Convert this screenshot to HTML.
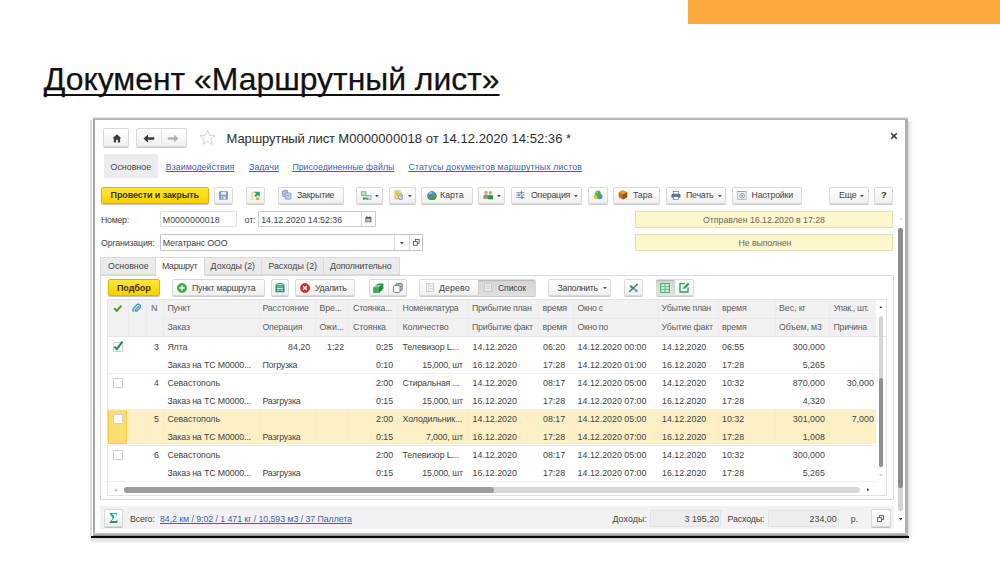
<!DOCTYPE html>
<html lang="ru">
<head>
<meta charset="utf-8">
<title>Документ «Маршрутный лист»</title>
<style>
html,body{margin:0;padding:0;}
body{width:1000px;height:563px;position:relative;overflow:hidden;background:#fff;font-family:"Liberation Sans",sans-serif;font-size:8.8px;color:#444;}
.a{position:absolute;white-space:nowrap;}
.orange{left:688px;top:0;width:312px;height:23.5px;background:#fea93f;}
h1{position:absolute;margin:0;left:43.7px;top:59px;font-size:31.9px;font-weight:normal;color:#111;line-height:40px;white-space:nowrap;text-decoration:underline;text-decoration-thickness:2.4px;text-underline-offset:3.7px;text-decoration-skip-ink:none;-webkit-text-stroke:0.25px #111;}
.btn{position:absolute;box-sizing:border-box;border:1px solid #d9d9d9;border-radius:2px;background:linear-gradient(#ffffff,#f0f0f0);box-shadow:0 1px 0.6px rgba(0,0,0,.2);}
.ybtn{position:absolute;box-sizing:border-box;border:1px solid #d9b800;border-radius:2px;background:linear-gradient(#ffe735,#f8d100);box-shadow:0 1px 1px rgba(0,0,0,.25);}
.b{font-weight:bold;color:#3a3510;}
.lnk{color:#3c62b4;text-decoration:underline;text-decoration-thickness:0.8px;text-underline-offset:1.3px;text-decoration-skip-ink:none;}
.hd{color:#606060;}
.st{color:#6c6856;}
</style>
</head>
<body>
<div class="a orange"></div>
<h1>Документ «Маршрутный лист»</h1>
<!-- window frame -->
<div class="a" style="left:91px;top:536px;width:818px;height:8px;background:linear-gradient(rgba(0,0,0,.22),rgba(0,0,0,0));"></div>
<div class="a" style="left:908px;top:121px;width:4.5px;height:416px;background:linear-gradient(90deg,rgba(0,0,0,.13),rgba(0,0,0,0));"></div>
<div class="a" style="left:93px;top:117.3px;width:814.9px;height:419px;background:#fff;"></div>
<div class="a" style="left:90.2px;top:119.5px;width:1.9px;height:416px;background:#dcdcdc;"></div>
<div class="a" style="left:93px;top:117.3px;width:814.9px;height:2.7px;background:linear-gradient(#f0f0f0,#c9c9c9 45%,#a3a3a3);"></div>
<div class="a" style="left:93px;top:118.6px;width:2.1px;height:417px;background:#a6a6a6;"></div>
<div class="a" style="left:905.2px;top:118.6px;width:2.7px;height:417px;background:#b0b0b0;"></div>
<div class="a" style="left:93px;top:533.4px;width:814.9px;height:2.6px;background:linear-gradient(#d2d2d2,#8a8a8a);"></div>
<div class="a" style="left:90.9px;top:535.8px;width:818.1px;height:2.5px;background:#0a0a0a;"></div>

<!-- title row -->
<div class="btn" style="left:103.2px;top:128.4px;width:25.8px;height:18.2px;"></div>
<svg class="a" style="left:111.5px;top:133.5px" width="9.90" height="9.00" viewBox="0 0 11 10"><path d="M5.5 0.3 L0.6 4.8 H2 V9.4 H4.5 V6.3 H6.5 V9.4 H9 V4.8 H10.4 Z" fill="#3a3a3a"/></svg>
<div class="btn" style="left:136.0px;top:128.4px;width:50.8px;height:18.2px;"></div>
<div class="a" style="left:161.2px;top:130.0px;width:0.9px;height:15.4px;background:#e6e6e6"></div>
<svg class="a" style="left:143.4px;top:133.6px" width="12.00" height="9.00" viewBox="0 0 12 9"><path d="M0.5 4.5 L5 0.6 V3.3 H11.2 V5.7 H5 V8.4 Z" fill="#3a3a3a"/></svg>
<svg class="a" style="left:167.2px;top:133.6px" width="12.00" height="9.00" viewBox="0 0 12 9"><path d="M11.5 4.5 L7 0.6 V3.3 H0.8 V5.7 H7 V8.4 Z" fill="#b4b4b4"/></svg>
<svg class="a" style="left:199.0px;top:129.0px" width="17.00" height="17.00" viewBox="0 0 17 17"><path d="M8.5 1.2 L10.6 6.2 L16 6.6 L11.9 10.1 L13.2 15.4 L8.5 12.5 L3.8 15.4 L5.1 10.1 L1 6.6 L6.4 6.2 Z" fill="#fff" stroke="#d2d2d2" stroke-width="1"/></svg>
<div class="a" style="left:226.6px;top:130.3px;font-size:13.04px;line-height:17px;color:#2e2e2e;"><span style="letter-spacing:-0.14px">Маршрутный лист </span><span style="letter-spacing:0.03px">М0000000018 от 14.12.2020 14:52:36 *</span></div>
<svg class="a" style="left:890.3px;top:131.9px" width="8.00" height="8.00" viewBox="0 0 8 8"><path d="M1.2 1.2 L6.8 6.8 M6.8 1.2 L1.2 6.8" stroke="#333" stroke-width="1.6" fill="none"/></svg>
<!-- nav row -->
<div class="a" style="left:103.5px;top:154.2px;width:54.5px;height:23.8px;background:#ececec;border-radius:2px;"></div>
<div class="a" style="top:160.6px;line-height:12px;font-size:8.8px;left:110.5px;letter-spacing:0.038px;">Основное</div>
<div class="a lnk" style="top:161.0px;line-height:12px;font-size:8.8px;left:165.8px;letter-spacing:0.032px;">Взаимодействия</div>
<div class="a lnk" style="top:161.0px;line-height:12px;font-size:8.8px;left:249.0px;letter-spacing:0.082px;">Задачи</div>
<div class="a lnk" style="top:161.0px;line-height:12px;font-size:8.8px;left:292.4px;letter-spacing:0.006px;">Присоединенные файлы</div>
<div class="a lnk" style="top:161.0px;line-height:12px;font-size:8.8px;left:408.4px;letter-spacing:0.139px;">Статусы документов маршрутных листов</div>
<!-- main toolbar -->
<div class="ybtn" style="left:100.8px;top:186.8px;width:107.8px;height:17.2px;"></div>
<div class="a b" style="top:189.3px;line-height:12px;font-size:9px;left:110.6px;letter-spacing:-0.105px;">Провести и закрыть</div>
<div class="btn" style="left:214.4px;top:186.8px;width:18.6px;height:17.2px;"></div>
<svg class="a" style="left:219.2px;top:191.0px" width="9.00" height="9.00" viewBox="0 0 10 10"><rect x="0.5" y="0.5" width="9" height="9" rx="1" fill="#7f9dc7" stroke="#6b8bb8" stroke-width="0.8"/><rect x="2.3" y="1" width="5.4" height="3.2" fill="#e6eef7"/><rect x="2.5" y="6" width="5" height="3.4" fill="#dfe7f0"/><rect x="3.4" y="6.6" width="1.4" height="2.2" fill="#6b8bb8"/></svg>
<div class="btn" style="left:245.6px;top:186.8px;width:19.0px;height:17.2px;"></div>
<svg class="a" style="left:250.6px;top:190.6px" width="9.90" height="9.90" viewBox="0 0 11 11"><path d="M1 1.5 H6.5 L9 4 V10.5 H1 Z" fill="#fbf3d0" stroke="#c9b98a" stroke-width="0.7"/><path d="M3.5 0.8 H9.8 V6.2 L7.6 4.6 L5.4 6.8 L3.6 5 L5.8 3 Z" fill="#25ad62"/><rect x="5.5" y="7.3" width="3.3" height="2.6" fill="#e2a13a"/></svg>
<div class="btn" style="left:277.6px;top:186.8px;width:66.0px;height:17.2px;"></div>
<svg class="a" style="left:281.9px;top:189.9px" width="9.90" height="9.90" viewBox="0 0 11 11"><rect x="0.6" y="0.6" width="5.6" height="6.6" rx="0.8" fill="#a9c0e2" stroke="#6f8fc4" stroke-width="0.8"/><rect x="3.6" y="3.2" width="6.4" height="7" rx="0.8" fill="#c6d6ee" stroke="#6f8fc4" stroke-width="0.8"/><path d="M5.2 6 H8.4 M5.2 8 H7.6" stroke="#7f95b2" stroke-width="0.8"/></svg>
<div class="a" style="top:189.3px;line-height:12px;font-size:8.8px;left:297.0px;letter-spacing:-0.228px;">Закрытие</div>
<div class="btn" style="left:356.0px;top:186.8px;width:27.0px;height:17.2px;"></div>
<svg class="a" style="left:361.1px;top:190.6px" width="10.80" height="9.90" viewBox="0 0 12 11"><rect x="0.5" y="0.8" width="5" height="4.2" fill="#bfe3b2" stroke="#58a65a" stroke-width="0.7"/><path d="M2.2 6.2 L5.2 8.6 L2.2 10.6 Z" fill="#3aa046"/><rect x="5.6" y="4.8" width="5.6" height="4.6" fill="#cfe0f2" stroke="#6f93bd" stroke-width="0.7"/><path d="M4 8.4 H8" stroke="#3aa046" stroke-width="1.2"/></svg>
<svg class="a" style="left:375.4px;top:194.7px" width="3.80" height="2.40" viewBox="0 0 3.8 2.4"><path d="M0 0 H3.8 L1.9 2.4 Z" fill="#555"/></svg>
<div class="btn" style="left:389.0px;top:186.8px;width:26.6px;height:17.2px;"></div>
<svg class="a" style="left:393.6px;top:190.4px" width="9.90" height="9.90" viewBox="0 0 11 11"><path d="M1 0.8 H6 L8 2.8 V10 H1 Z" fill="#f7d978" stroke="#d1a93a" stroke-width="0.7"/><path d="M2.4 3.6 H6.4 M2.4 5.4 H5" stroke="#c79b2a" stroke-width="0.8"/><circle cx="7.6" cy="7.8" r="2.6" fill="#e9f0fa" stroke="#4f78b3" stroke-width="0.9"/><path d="M7.6 6.4 V7.9 H8.8" stroke="#4f78b3" stroke-width="0.7" fill="none"/></svg>
<svg class="a" style="left:408.1px;top:194.7px" width="3.80" height="2.40" viewBox="0 0 3.8 2.4"><path d="M0 0 H3.8 L1.9 2.4 Z" fill="#555"/></svg>
<div class="btn" style="left:421.0px;top:186.8px;width:52.0px;height:17.2px;"></div>
<svg class="a" style="left:427.1px;top:190.6px" width="9.90" height="9.90" viewBox="0 0 11 11"><circle cx="5.5" cy="5.5" r="5" fill="#4d8fd0" stroke="#6f7f86" stroke-width="0.8"/><path d="M1 7 Q3.2 3.4 5.2 6 Q7 3.8 10 7.4 A5 5 0 0 1 1 7 Z" fill="#3fa14a"/><path d="M2.4 3 Q4 1.4 6 2.2" stroke="#d8ecff" stroke-width="1" fill="none"/></svg>
<div class="a" style="top:189.3px;line-height:12px;font-size:8.8px;left:440.0px;letter-spacing:0.012px;">Карта</div>
<div class="btn" style="left:478.4px;top:186.8px;width:26.6px;height:17.2px;"></div>
<svg class="a" style="left:482.9px;top:190.4px" width="10.80" height="9.90" viewBox="0 0 12 11"><circle cx="3.4" cy="2.6" r="1.9" fill="#d8a46a"/><path d="M0.4 9.8 V6.6 Q0.4 4.8 3.4 4.8 Q6 4.8 6.2 6.6 V9.8 Z" fill="#8a8f96"/><circle cx="8.2" cy="3" r="1.9" fill="#d8a46a"/><path d="M5.4 10.4 V7 Q5.6 5.2 8.2 5.2 Q11 5.2 11.2 7 V10.4 Z" fill="#2f9a4a"/><path d="M7.2 8.6 L8.4 10.6 L9.6 8.6 Z" fill="#1f7f3a"/></svg>
<svg class="a" style="left:497.1px;top:194.7px" width="3.80" height="2.40" viewBox="0 0 3.8 2.4"><path d="M0 0 H3.8 L1.9 2.4 Z" fill="#555"/></svg>
<div class="btn" style="left:511.0px;top:186.8px;width:71.4px;height:17.2px;"></div>
<svg class="a" style="left:516.3px;top:191.2px" width="8.80" height="8.00" viewBox="0 0 11 10"><path d="M0.4 2 H10.6 M0.4 5 H10.6 M0.4 8 H10.6" stroke="#5f86b8" stroke-width="1"/><path d="M6.8 0.4 V3.6 M3.6 3.4 V6.6 M7.4 6.4 V9.6" stroke="#3f6ea8" stroke-width="1.4"/></svg>
<div class="a" style="top:189.3px;line-height:12px;font-size:8.8px;left:531.0px;letter-spacing:-0.240px;">Операция</div>
<svg class="a" style="left:574.1px;top:194.7px" width="3.80" height="2.40" viewBox="0 0 3.8 2.4"><path d="M0 0 H3.8 L1.9 2.4 Z" fill="#555"/></svg>
<div class="btn" style="left:588.0px;top:186.8px;width:19.6px;height:17.2px;"></div>
<svg class="a" style="left:593.0px;top:190.4px" width="9.90" height="9.90" viewBox="0 0 11 11"><circle cx="3.4" cy="7.2" r="3" fill="#f2c62e"/><circle cx="7.6" cy="7.2" r="3" fill="#3f93da"/><circle cx="5.5" cy="3.6" r="3" fill="#49b04e"/><circle cx="4.6" cy="2.6" r="0.9" fill="#bfe9bf"/></svg>
<div class="btn" style="left:613.0px;top:186.8px;width:47.4px;height:17.2px;"></div>
<svg class="a" style="left:618.3px;top:190.4px" width="9.90" height="9.90" viewBox="0 0 11 11"><path d="M5.5 0.4 L10.2 2.6 V8.2 L5.5 10.6 L0.8 8.2 V2.6 Z" fill="#c0701c"/><path d="M5.5 0.4 L10.2 2.6 L5.5 5 L0.8 2.6 Z" fill="#e59a3c"/><path d="M5.5 5 V10.6 L10.2 8.2 V2.6 Z" fill="#9a5512"/></svg>
<div class="a" style="top:189.3px;line-height:12px;font-size:8.8px;left:633.0px;letter-spacing:-0.12px;">Тара</div>
<div class="btn" style="left:666.0px;top:186.8px;width:60.4px;height:17.2px;"></div>
<svg class="a" style="left:670.8px;top:190.7px" width="9.90" height="9.00" viewBox="0 0 11 10"><rect x="2.6" y="0.5" width="5.8" height="3" fill="#f4f7fb" stroke="#55698a" stroke-width="0.7"/><rect x="0.5" y="3.2" width="10" height="4.4" rx="1" fill="#54709c"/><rect x="2.6" y="6" width="5.8" height="3.5" fill="#fff" stroke="#55698a" stroke-width="0.7"/></svg>
<div class="a" style="top:189.3px;line-height:12px;font-size:8.8px;left:686.0px;letter-spacing:-0.223px;">Печать</div>
<svg class="a" style="left:718.1px;top:194.7px" width="3.80" height="2.40" viewBox="0 0 3.8 2.4"><path d="M0 0 H3.8 L1.9 2.4 Z" fill="#555"/></svg>
<div class="btn" style="left:732.0px;top:186.8px;width:69.6px;height:17.2px;"></div>
<svg class="a" style="left:737.1px;top:190.4px" width="9.90" height="9.90" viewBox="0 0 11 11"><rect x="0.6" y="1.6" width="9.6" height="8.8" fill="#eef1f5" stroke="#9aa7b8" stroke-width="0.7"/><path d="M0.6 1.6 H10.2" stroke="#7f8ea3" stroke-width="1.2" stroke-dasharray="1.2 0.8"/><circle cx="5.8" cy="6.4" r="2.6" fill="none" stroke="#8796ab" stroke-width="1"/><circle cx="5.8" cy="6.4" r="1" fill="#8796ab"/></svg>
<div class="a" style="top:189.3px;line-height:12px;font-size:8.8px;left:751.6px;letter-spacing:-0.205px;">Настройки</div>
<div class="btn" style="left:829.4px;top:186.8px;width:39.4px;height:17.2px;"></div>
<div class="a" style="top:189.3px;line-height:12px;font-size:8.8px;left:839.0px;letter-spacing:-0.12px;">Еще</div>
<svg class="a" style="left:860.1px;top:194.7px" width="3.80" height="2.40" viewBox="0 0 3.8 2.4"><path d="M0 0 H3.8 L1.9 2.4 Z" fill="#555"/></svg>
<div class="btn" style="left:873.8px;top:186.8px;width:19.4px;height:17.2px;"></div>
<div class="a b" style="top:189.3px;line-height:12px;font-size:9.5px;left:881.0px;">?</div>
<!-- header fields -->
<div class="a" style="top:213.6px;line-height:12px;font-size:8.8px;left:101.0px;letter-spacing:-0.278px;">Номер:</div>
<div class="a" style="left:160.0px;top:211.0px;width:77.4px;height:16.4px;box-sizing:border-box;border:1px solid #e0e0e0;background:#fff;border-radius:1px;"></div>
<div class="a" style="top:213.6px;line-height:12px;font-size:8.8px;left:162.8px;letter-spacing:0.051px;">М0000000018</div>
<div class="a" style="top:213.6px;line-height:12px;font-size:8.8px;left:244.6px;letter-spacing:-0.12px;">от:</div>
<div class="a" style="left:258.0px;top:211.0px;width:117.6px;height:16.4px;box-sizing:border-box;border:1px solid #c9c9c9;background:#fff;border-radius:1px;"></div>
<div class="a" style="left:361.4px;top:212.0px;width:1.0px;height:14.4px;background:#dcdcdc;"></div>
<div class="a" style="top:213.6px;line-height:12px;font-size:8.85px;left:261.2px;letter-spacing:-0.008px;">14.12.2020 14:52:36</div>
<svg class="a" style="left:365.2px;top:215.8px" width="6.80" height="6.80" viewBox="0 0 8 8"><rect x="0.5" y="1.2" width="7" height="6.3" rx="0.8" fill="#555"/><rect x="1.6" y="3.2" width="4.8" height="3.2" fill="#fff"/><path d="M2.2 0.2 V2 M5.8 0.2 V2" stroke="#555" stroke-width="1"/><path d="M1.6 4.8 H6.4 M3.2 3.2 V6.4 M4.8 3.2 V6.4" stroke="#777" stroke-width="0.5"/></svg>
<div class="a" style="left:635.0px;top:211.0px;width:258.2px;height:16.6px;box-sizing:border-box;border:1px solid #e6deb0;background:#fdf7ce;"></div>
<div class="a st" style="top:213.6px;line-height:12px;font-size:8.8px;left:703.0px;letter-spacing:-0.030px;">Отправлен 16.12.2020 в 17:28</div>
<div class="a" style="top:236.6px;line-height:12px;font-size:8.8px;left:101.0px;letter-spacing:-0.167px;">Организация:</div>
<div class="a" style="left:160.0px;top:234.0px;width:263.0px;height:16.6px;box-sizing:border-box;border:1px solid #c4c4c4;background:#fff;border-radius:1px;"></div>
<div class="a" style="left:394.4px;top:235.0px;width:1.0px;height:14.6px;background:#dcdcdc;"></div>
<div class="a" style="left:408.8px;top:235.0px;width:1.0px;height:14.6px;background:#dcdcdc;"></div>
<div class="a" style="top:236.6px;line-height:12px;font-size:8.8px;left:162.8px;letter-spacing:-0.102px;">Мегатранс ООО</div>
<svg class="a" style="left:399.9px;top:241.7px" width="3.80" height="2.40" viewBox="0 0 3.8 2.4"><path d="M0 0 H3.8 L1.9 2.4 Z" fill="#444"/></svg>
<svg class="a" style="left:412.9px;top:239.1px" width="6.80" height="6.80" viewBox="0 0 8 8"><rect x="2.8" y="0.6" width="4.4" height="4.4" fill="#fff" stroke="#555" stroke-width="1"/><rect x="0.6" y="3" width="4.4" height="4.4" fill="#fff" stroke="#555" stroke-width="1"/></svg>
<div class="a" style="left:635.0px;top:233.8px;width:258.2px;height:16.8px;box-sizing:border-box;border:1px solid #e6deb0;background:#fdf7ce;"></div>
<div class="a st" style="top:236.6px;line-height:12px;font-size:8.8px;left:738.6px;letter-spacing:-0.12px;">Не выполнен</div>
<!-- tabs -->
<div class="a" style="left:100.2px;top:274.5px;width:793.4px;height:225.1px;box-sizing:border-box;border:1px solid #dadada;background:#fff;"></div>
<div class="a" style="left:100.2px;top:256.6px;width:55.4px;height:18.6px;box-sizing:border-box;border:1px solid #dadada;background:#ebebeb;"></div>
<div class="a" style="top:260.1px;line-height:12px;font-size:8.8px;left:108.0px;letter-spacing:0.038px;">Основное</div>
<div class="a" style="left:154.6px;top:256.6px;width:50.4px;height:19.4px;box-sizing:border-box;border:1px solid #dadada;border-bottom:none;background:#fff;"></div>
<div class="a" style="top:260.1px;line-height:12px;font-size:8.8px;left:162.0px;letter-spacing:-0.323px;">Маршрут</div>
<div class="a" style="left:204.0px;top:256.6px;width:58.4px;height:18.6px;box-sizing:border-box;border:1px solid #dadada;background:#ebebeb;"></div>
<div class="a" style="top:260.1px;line-height:12px;font-size:8.8px;left:210.6px;letter-spacing:-0.011px;">Доходы (2)</div>
<div class="a" style="left:261.4px;top:256.6px;width:62.6px;height:18.6px;box-sizing:border-box;border:1px solid #dadada;background:#ebebeb;"></div>
<div class="a" style="top:260.1px;line-height:12px;font-size:8.8px;left:268.4px;letter-spacing:0.007px;">Расходы (2)</div>
<div class="a" style="left:323.0px;top:256.6px;width:77.0px;height:18.6px;box-sizing:border-box;border:1px solid #dadada;background:#ebebeb;"></div>
<div class="a" style="top:260.1px;line-height:12px;font-size:8.8px;left:330.0px;letter-spacing:-0.138px;">Дополнительно</div>
<!-- inner toolbar -->
<div class="ybtn" style="left:107.6px;top:279.0px;width:52.4px;height:17.4px;"></div>
<div class="a b" style="top:281.6px;line-height:12px;font-size:9px;left:117.0px;letter-spacing:-0.095px;">Подбор</div>
<div class="btn" style="left:172.0px;top:279.0px;width:92.6px;height:17.4px;"></div>
<svg class="a" style="left:177.2px;top:282.8px" width="10.00" height="10.00" viewBox="0 0 10 10"><circle cx="5" cy="5" r="4.6" fill="#3fae49" stroke="#2b8f39" stroke-width="0.6"/><path d="M5 2.4 V7.6 M2.4 5 H7.6" stroke="#fff" stroke-width="1.5"/></svg>
<div class="a" style="top:281.6px;line-height:12px;font-size:8.8px;left:192.0px;letter-spacing:-0.260px;">Пункт маршрута</div>
<div class="btn" style="left:270.6px;top:279.0px;width:18.8px;height:17.4px;"></div>
<svg class="a" style="left:274.8px;top:282.3px" width="10.00" height="10.60" viewBox="0 0 10 10.6"><path d="M0.5 2.4 Q5 -1 9.5 2.4 V10.2 H0.5 Z" fill="#2f9a5a"/><path d="M1.4 2.8 Q5 0.6 8.6 2.8 V3.6 H1.4 Z" fill="#9fd8b0"/><rect x="2" y="4" width="6" height="4.6" fill="#5aa0dc"/><rect x="2" y="6.2" width="6" height="0.9" fill="#dfefff"/><rect x="2.6" y="8" width="1.2" height="1.2" fill="#f5e37a"/><rect x="6.2" y="8" width="1.2" height="1.2" fill="#f5e37a"/></svg>
<div class="btn" style="left:295.0px;top:279.0px;width:60.0px;height:17.4px;"></div>
<svg class="a" style="left:300.0px;top:282.8px" width="10.00" height="10.00" viewBox="0 0 10 10"><circle cx="5" cy="5" r="4.6" fill="#d9302c" stroke="#b01f1f" stroke-width="0.6"/><path d="M3.2 3.2 L6.8 6.8 M6.8 3.2 L3.2 6.8" stroke="#fff" stroke-width="1.4"/></svg>
<div class="a" style="top:281.6px;line-height:12px;font-size:8.8px;left:315.0px;letter-spacing:-0.307px;">Удалить</div>
<div class="btn" style="left:368.6px;top:279.0px;width:38.0px;height:17.4px;"></div>
<div class="a" style="left:387.8px;top:280.0px;width:1.0px;height:15.4px;background:#dedede;"></div>
<svg class="a" style="left:372.8px;top:282.6px" width="11.00" height="10.00" viewBox="0 0 11 10"><path d="M3 2 L6 0.6 L10.4 0.6 L10.4 5.4 L8 8 H3 Z" fill="#2f9a4a"/><path d="M0.6 4.4 H6.4 V9.6 H0.6 Z" fill="#3fae55" stroke="#1f7f3a" stroke-width="0.6"/><path d="M0.6 4.4 L3 2 H8.6 L6.4 4.4 Z" fill="#7fd08f"/><path d="M6.4 4.4 L8.6 2 V7.2 L6.4 9.6 Z" fill="#1f7f3a"/></svg>
<svg class="a" style="left:392.8px;top:282.6px" width="10.00" height="10.00" viewBox="0 0 10 10"><rect x="2.8" y="0.6" width="6.4" height="6.8" rx="0.8" fill="#b3bccb" stroke="#6a7488" stroke-width="0.9"/><rect x="0.6" y="2.6" width="6.4" height="6.8" rx="0.8" fill="#fff" stroke="#6a7488" stroke-width="0.9"/></svg>
<div class="btn" style="left:419.2px;top:279.0px;width:116.6px;height:17.4px;"></div>
<div class="a" style="left:478.4px;top:279.5px;width:57.1px;height:16.4px;background:linear-gradient(#d5d5d5,#e0e0e0);border-radius:0 2px 2px 0;box-shadow:inset 0 1px 1px rgba(0,0,0,.15);"></div>
<div class="a" style="left:478.0px;top:280.0px;width:1.0px;height:15.4px;background:#cfcfcf;"></div>
<svg class="a" style="left:426.0px;top:283.0px" width="8.00" height="9.00" viewBox="0 0 8 9"><rect x="0.5" y="0.5" width="7" height="8" fill="#f3f3f3" stroke="#c9c9c9" stroke-width="0.8"/><path d="M2.6 0.5 V8.5 M2.6 3 H7.5 M2.6 5.8 H7.5" stroke="#cfcfcf" stroke-width="0.7"/></svg>
<div class="a" style="top:281.6px;line-height:12px;font-size:8.8px;left:439.0px;letter-spacing:0.089px;">Дерево</div>
<svg class="a" style="left:484.0px;top:283.0px" width="8.00" height="9.00" viewBox="0 0 8 9"><rect x="0.5" y="0.5" width="7" height="8" fill="#ececec" stroke="#c2c2c2" stroke-width="0.8"/><path d="M2 3 H6 M2 5.2 H6" stroke="#c2c2c2" stroke-width="0.7"/></svg>
<div class="a" style="top:281.6px;line-height:12px;font-size:8.8px;left:498.0px;letter-spacing:-0.233px;">Список</div>
<div class="btn" style="left:548.4px;top:279.0px;width:62.2px;height:17.4px;"></div>
<div class="a" style="top:281.6px;line-height:12px;font-size:8.8px;left:557.6px;letter-spacing:-0.328px;">Заполнить</div>
<svg class="a" style="left:603.1px;top:286.9px" width="3.80" height="2.40" viewBox="0 0 3.8 2.4"><path d="M0 0 H3.8 L1.9 2.4 Z" fill="#555"/></svg>
<div class="btn" style="left:623.6px;top:279.0px;width:19.4px;height:17.4px;"></div>
<svg class="a" style="left:628.0px;top:282.6px" width="11.00" height="10.00" viewBox="0 0 11 10"><path d="M1 9 L9.6 1.2" stroke="#2f9a4a" stroke-width="1.6"/><path d="M2.2 2.6 L4.6 5" stroke="#2f9a4a" stroke-width="2"/><path d="M6.6 6.2 L9.4 8.8" stroke="#5aa0e0" stroke-width="2.2"/><circle cx="5.4" cy="5.2" r="1.2" fill="#2b7f8a"/></svg>
<div class="btn" style="left:655.6px;top:279.0px;width:38.0px;height:17.4px;"></div>
<div class="a" style="left:656.1px;top:279.5px;width:18.3px;height:16.4px;background:linear-gradient(#d6d6d6,#e2e2e2);border-radius:2px 0 0 2px;box-shadow:inset 0 1px 1px rgba(0,0,0,.15);"></div>
<div class="a" style="left:674.2px;top:280.0px;width:1.0px;height:15.4px;background:#cfcfcf;"></div>
<svg class="a" style="left:660.0px;top:282.6px" width="10.00" height="10.00" viewBox="0 0 10 10"><rect x="0.6" y="0.6" width="8.8" height="8.8" fill="#d3efd9" stroke="#49a86a" stroke-width="1"/><path d="M0.6 3.6 H9.4 M0.6 6.4 H9.4 M5 0.6 V9.4" stroke="#5ab47a" stroke-width="0.9"/></svg>
<svg class="a" style="left:679.0px;top:282.4px" width="11.00" height="11.00" viewBox="0 0 11 11"><path d="M6 1.6 H1 V10 H9 V5.6" fill="#eefaf1" stroke="#2f9a5a" stroke-width="1.3"/><path d="M4 7.2 L5 4.6 L9 0.8 L10.4 2.2 L6.6 6.2 Z" fill="#2f9a5a"/></svg>
<!-- table -->
<div class="a" style="left:107.4px;top:299.2px;width:779.6px;height:196.4px;box-sizing:border-box;border:1px solid #e3e3e3;background:#fff;"></div>
<div class="a" style="left:107.9px;top:299.7px;width:768.1px;height:36.9px;background:#f1f1f1;"></div>
<div class="a" style="left:107.9px;top:336.3px;width:778.6px;height:0.8px;background:#e3e3e3;"></div>
<div class="a" style="left:107.9px;top:409.4px;width:768.6px;height:35.0px;background:#fdf0c6;"></div>
<div class="a" style="left:107.9px;top:409.4px;width:18.9px;height:35.0px;box-sizing:border-box;background:#fbdd72;border:1px solid #f4cc45;"></div>
<div class="a" style="left:107.9px;top:372.6px;width:768.6px;height:0.8px;background:#f0f0f0;"></div>
<div class="a" style="left:107.9px;top:408.8px;width:768.6px;height:0.8px;background:#f0f0f0;"></div>
<div class="a" style="left:107.9px;top:444.6px;width:768.6px;height:0.8px;background:#f0f0f0;"></div>
<div class="a" style="left:107.9px;top:481.2px;width:768.6px;height:0.8px;background:#f0f0f0;"></div>
<div class="a" style="left:127.6px;top:299.7px;width:0.9px;height:36.7px;background:#ebebeb;"></div>
<div class="a" style="left:146.0px;top:299.7px;width:0.9px;height:36.7px;background:#ebebeb;"></div>
<div class="a" style="left:162.6px;top:299.7px;width:0.9px;height:36.7px;background:#ebebeb;"></div>
<div class="a" style="left:258.6px;top:299.7px;width:0.9px;height:36.7px;background:#ebebeb;"></div>
<div class="a" style="left:314.6px;top:299.7px;width:0.9px;height:36.7px;background:#ebebeb;"></div>
<div class="a" style="left:348.0px;top:299.7px;width:0.9px;height:36.7px;background:#ebebeb;"></div>
<div class="a" style="left:397.4px;top:299.7px;width:0.9px;height:36.7px;background:#ebebeb;"></div>
<div class="a" style="left:468.0px;top:299.7px;width:0.9px;height:36.7px;background:#ebebeb;"></div>
<div class="a" style="left:538.0px;top:299.7px;width:0.9px;height:36.7px;background:#ebebeb;"></div>
<div class="a" style="left:573.0px;top:299.7px;width:0.9px;height:36.7px;background:#ebebeb;"></div>
<div class="a" style="left:658.0px;top:299.7px;width:0.9px;height:36.7px;background:#ebebeb;"></div>
<div class="a" style="left:717.6px;top:299.7px;width:0.9px;height:36.7px;background:#ebebeb;"></div>
<div class="a" style="left:774.5px;top:299.7px;width:0.9px;height:36.7px;background:#ebebeb;"></div>
<div class="a" style="left:829.3px;top:299.7px;width:0.9px;height:36.7px;background:#ebebeb;"></div>
<div class="a" style="left:258.6px;top:318.0px;width:0.9px;height:0.0px;"></div>
<div class="a" style="left:314.6px;top:318.0px;width:0.9px;height:0.0px;"></div>
<div class="a" style="left:348.0px;top:318.0px;width:0.9px;height:0.0px;"></div>
<div class="a" style="left:397.4px;top:318.0px;width:0.9px;height:0.0px;"></div>
<div class="a" style="left:468.0px;top:318.0px;width:0.9px;height:0.0px;"></div>
<div class="a" style="left:538.0px;top:318.0px;width:0.9px;height:0.0px;"></div>
<div class="a" style="left:573.0px;top:318.0px;width:0.9px;height:0.0px;"></div>
<div class="a" style="left:658.0px;top:318.0px;width:0.9px;height:0.0px;"></div>
<div class="a" style="left:717.6px;top:318.0px;width:0.9px;height:0.0px;"></div>
<div class="a" style="left:774.5px;top:318.0px;width:0.9px;height:0.0px;"></div>
<div class="a" style="left:829.3px;top:318.0px;width:0.9px;height:0.0px;"></div>
<div class="a" style="left:162.6px;top:317.8px;width:713.4px;height:0.8px;background:#eaeaea;"></div>
<div class="a" style="left:127.6px;top:409.4px;width:0.9px;height:35.0px;background:#fbedc1;"></div>
<div class="a" style="left:146.0px;top:409.4px;width:0.9px;height:35.0px;background:#fbedc1;"></div>
<div class="a" style="left:162.6px;top:409.4px;width:0.9px;height:35.0px;background:#fbedc1;"></div>
<div class="a" style="left:258.6px;top:409.4px;width:0.9px;height:35.0px;background:#fbedc1;"></div>
<div class="a" style="left:314.6px;top:409.4px;width:0.9px;height:35.0px;background:#fbedc1;"></div>
<div class="a" style="left:348.0px;top:409.4px;width:0.9px;height:35.0px;background:#fbedc1;"></div>
<div class="a" style="left:397.4px;top:409.4px;width:0.9px;height:35.0px;background:#fbedc1;"></div>
<div class="a" style="left:468.0px;top:409.4px;width:0.9px;height:35.0px;background:#fbedc1;"></div>
<div class="a" style="left:538.0px;top:409.4px;width:0.9px;height:35.0px;background:#fbedc1;"></div>
<div class="a" style="left:573.0px;top:409.4px;width:0.9px;height:35.0px;background:#fbedc1;"></div>
<div class="a" style="left:658.0px;top:409.4px;width:0.9px;height:35.0px;background:#fbedc1;"></div>
<div class="a" style="left:717.6px;top:409.4px;width:0.9px;height:35.0px;background:#fbedc1;"></div>
<div class="a" style="left:774.5px;top:409.4px;width:0.9px;height:35.0px;background:#fbedc1;"></div>
<div class="a" style="left:829.3px;top:409.4px;width:0.9px;height:35.0px;background:#fbedc1;"></div>
<svg class="a" style="left:112.5px;top:304.0px" width="9.50" height="8.55" viewBox="0 0 10 9"><path d="M1.2 4.6 L3.9 7.2 L8.8 1.8" stroke="#4d9e2e" stroke-width="2.2" fill="none"/></svg>
<svg class="a" style="left:132.4px;top:303.0px" width="9.00" height="10.00" viewBox="0 0 9 10"><path d="M6.8 3.2 L3.6 6.4 Q2.8 7.4 3.8 8 Q4.6 8.4 5.4 7.6 L8 4.8 Q9 3 7.6 1.8 Q6 0.6 4.6 2 L1.6 5.2 Q0.2 7 1.6 8.6" stroke="#4a9bd4" stroke-width="1.5" fill="none"/></svg>
<div class="a hd" style="top:302.2px;line-height:12px;font-size:8.85px;left:151.0px;">N</div>
<div class="a hd" style="top:302.2px;line-height:12px;font-size:8.8px;left:167.4px;letter-spacing:-0.12px;">Пункт</div>
<div class="a hd" style="top:321.4px;line-height:12px;font-size:8.8px;left:167.4px;letter-spacing:-0.12px;">Заказ</div>
<div class="a hd" style="top:302.2px;line-height:12px;font-size:8.8px;left:262.4px;letter-spacing:-0.117px;">Расстояние</div>
<div class="a hd" style="top:321.4px;line-height:12px;font-size:8.8px;left:262.4px;letter-spacing:-0.133px;">Операция</div>
<div class="a hd" style="top:302.2px;line-height:12px;font-size:8.8px;left:319.4px;letter-spacing:-0.073px;">Вре...</div>
<div class="a hd" style="top:321.4px;line-height:12px;font-size:8.8px;left:319.4px;letter-spacing:-0.12px;">Ожи...</div>
<div class="a hd" style="top:302.2px;line-height:12px;font-size:8.8px;left:353.0px;letter-spacing:-0.219px;">Стоянка...</div>
<div class="a hd" style="top:321.4px;line-height:12px;font-size:8.8px;left:353.0px;letter-spacing:-0.12px;">Стоянка</div>
<div class="a hd" style="top:302.2px;line-height:12px;font-size:8.8px;left:402.6px;letter-spacing:-0.265px;">Номенклатура</div>
<div class="a hd" style="top:321.4px;line-height:12px;font-size:8.8px;left:402.6px;letter-spacing:-0.12px;">Количество</div>
<div class="a hd" style="top:302.2px;line-height:12px;font-size:8.8px;left:472.0px;letter-spacing:-0.306px;">Прибытие план</div>
<div class="a hd" style="top:321.4px;line-height:12px;font-size:8.8px;left:472.0px;letter-spacing:-0.231px;">Прибытие факт</div>
<div class="a hd" style="top:302.2px;line-height:12px;font-size:8.8px;left:542.4px;letter-spacing:-0.151px;">время</div>
<div class="a hd" style="top:321.4px;line-height:12px;font-size:8.8px;left:542.4px;letter-spacing:-0.151px;">время</div>
<div class="a hd" style="top:302.2px;line-height:12px;font-size:8.8px;left:577.6px;letter-spacing:-0.345px;">Окно с</div>
<div class="a hd" style="top:321.4px;line-height:12px;font-size:8.8px;left:577.6px;letter-spacing:-0.330px;">Окно по</div>
<div class="a hd" style="top:302.2px;line-height:12px;font-size:8.8px;left:661.6px;letter-spacing:-0.313px;">Убытие план</div>
<div class="a hd" style="top:321.4px;line-height:12px;font-size:8.8px;left:661.6px;letter-spacing:-0.167px;">Убытие факт</div>
<div class="a hd" style="top:302.2px;line-height:12px;font-size:8.8px;left:722.0px;letter-spacing:-0.151px;">время</div>
<div class="a hd" style="top:321.4px;line-height:12px;font-size:8.8px;left:722.0px;letter-spacing:-0.151px;">время</div>
<div class="a hd" style="top:302.2px;line-height:12px;font-size:8.8px;left:779.0px;letter-spacing:-0.063px;">Вес, кг</div>
<div class="a hd" style="top:321.4px;line-height:12px;font-size:8.8px;left:779.0px;letter-spacing:-0.125px;">Объем, м3</div>
<div class="a hd" style="top:302.2px;line-height:12px;font-size:8.8px;left:833.5px;letter-spacing:-0.357px;">Упак., шт.</div>
<div class="a hd" style="top:321.4px;line-height:12px;font-size:8.8px;left:833.5px;letter-spacing:-0.291px;">Причина</div>
<div class="a" style="left:113.2px;top:341.7px;width:9.8px;height:10.7px;box-sizing:border-box;border:1px solid #cfcfcf;background:#fff;border-radius:1px;"></div>
<svg class="a" style="left:113.4px;top:339.9px" width="11.00" height="11.00" viewBox="0 0 11 11"><path d="M1.2 6.6 L3.8 9.2 L9.4 1.6" stroke="#1c8f52" stroke-width="2" fill="none"/></svg>
<div class="a" style="top:340.5px;line-height:12px;font-size:8.85px;right:841.2px;">3</div>
<div class="a" style="top:340.5px;line-height:12px;font-size:8.8px;left:167.4px;letter-spacing:-0.12px;">Ялта</div>
<div class="a" style="top:340.5px;line-height:12px;font-size:8.85px;right:689.8px;">84,20</div>
<div class="a" style="top:340.5px;line-height:12px;font-size:8.85px;right:655.8px;">1:22</div>
<div class="a" style="top:340.5px;line-height:12px;font-size:8.85px;right:606.8px;">0:25</div>
<div class="a" style="top:340.5px;line-height:12px;font-size:8.8px;left:402.6px;letter-spacing:-0.110px;">Телевизор L...</div>
<div class="a" style="top:340.5px;line-height:12px;font-size:8.85px;left:472.6px;">14.12.2020</div>
<div class="a" style="top:340.5px;line-height:12px;font-size:8.85px;left:543.0px;">06:20</div>
<div class="a" style="top:340.5px;line-height:12px;font-size:8.85px;left:577.6px;">14.12.2020 00:00</div>
<div class="a" style="top:340.5px;line-height:12px;font-size:8.85px;left:662.0px;">14.12.2020</div>
<div class="a" style="top:340.5px;line-height:12px;font-size:8.85px;left:722.0px;">06:55</div>
<div class="a" style="top:340.5px;line-height:12px;font-size:8.85px;right:175.2px;">300,000</div>
<div class="a" style="top:358.5px;line-height:12px;font-size:8.8px;left:167.4px;letter-spacing:-0.129px;">Заказ на ТС М0000...</div>
<div class="a" style="top:358.5px;line-height:12px;font-size:8.8px;left:262.4px;letter-spacing:-0.212px;">Погрузка</div>
<div class="a" style="top:358.5px;line-height:12px;font-size:8.85px;right:606.8px;">0:10</div>
<div class="a" style="top:358.5px;line-height:12px;font-size:8.8px;right:537.2px;letter-spacing:-0.241px;">15,000, шт</div>
<div class="a" style="top:358.5px;line-height:12px;font-size:8.85px;left:472.6px;">16.12.2020</div>
<div class="a" style="top:358.5px;line-height:12px;font-size:8.85px;left:543.0px;">17:28</div>
<div class="a" style="top:358.5px;line-height:12px;font-size:8.85px;left:577.6px;">14.12.2020 01:00</div>
<div class="a" style="top:358.5px;line-height:12px;font-size:8.85px;left:662.0px;">16.12.2020</div>
<div class="a" style="top:358.5px;line-height:12px;font-size:8.85px;left:722.0px;">17:28</div>
<div class="a" style="top:358.5px;line-height:12px;font-size:8.85px;right:175.2px;">5,265</div>
<div class="a" style="left:113.2px;top:377.7px;width:9.8px;height:10.7px;box-sizing:border-box;border:1px solid #cfcfcf;background:#fff;border-radius:1px;"></div>
<div class="a" style="top:376.5px;line-height:12px;font-size:8.85px;right:841.2px;">4</div>
<div class="a" style="top:376.5px;line-height:12px;font-size:8.8px;left:167.4px;letter-spacing:-0.050px;">Севастополь</div>
<div class="a" style="top:376.5px;line-height:12px;font-size:8.85px;right:606.8px;">2:00</div>
<div class="a" style="top:376.5px;line-height:12px;font-size:8.8px;left:402.6px;letter-spacing:-0.170px;">Стиральная ...</div>
<div class="a" style="top:376.5px;line-height:12px;font-size:8.85px;left:472.6px;">14.12.2020</div>
<div class="a" style="top:376.5px;line-height:12px;font-size:8.85px;left:543.0px;">08:17</div>
<div class="a" style="top:376.5px;line-height:12px;font-size:8.85px;left:577.6px;">14.12.2020 05:00</div>
<div class="a" style="top:376.5px;line-height:12px;font-size:8.85px;left:662.0px;">14.12.2020</div>
<div class="a" style="top:376.5px;line-height:12px;font-size:8.85px;left:722.0px;">10:32</div>
<div class="a" style="top:376.5px;line-height:12px;font-size:8.85px;right:175.2px;">870,000</div>
<div class="a" style="top:376.5px;line-height:12px;font-size:8.85px;right:126.2px;">30,000</div>
<div class="a" style="top:394.5px;line-height:12px;font-size:8.8px;left:167.4px;letter-spacing:-0.129px;">Заказ на ТС М0000...</div>
<div class="a" style="top:394.5px;line-height:12px;font-size:8.8px;left:262.4px;letter-spacing:-0.186px;">Разгрузка</div>
<div class="a" style="top:394.5px;line-height:12px;font-size:8.85px;right:606.8px;">0:15</div>
<div class="a" style="top:394.5px;line-height:12px;font-size:8.8px;right:537.2px;letter-spacing:-0.241px;">15,000, шт</div>
<div class="a" style="top:394.5px;line-height:12px;font-size:8.85px;left:472.6px;">16.12.2020</div>
<div class="a" style="top:394.5px;line-height:12px;font-size:8.85px;left:543.0px;">17:28</div>
<div class="a" style="top:394.5px;line-height:12px;font-size:8.85px;left:577.6px;">14.12.2020 07:00</div>
<div class="a" style="top:394.5px;line-height:12px;font-size:8.85px;left:662.0px;">16.12.2020</div>
<div class="a" style="top:394.5px;line-height:12px;font-size:8.85px;left:722.0px;">17:28</div>
<div class="a" style="top:394.5px;line-height:12px;font-size:8.85px;right:175.2px;">4,320</div>
<div class="a" style="left:113.2px;top:413.7px;width:9.8px;height:10.7px;box-sizing:border-box;border:1px solid #cfcfcf;background:#fff;border-radius:1px;"></div>
<div class="a" style="top:412.5px;line-height:12px;font-size:8.85px;right:841.2px;">5</div>
<div class="a" style="top:412.5px;line-height:12px;font-size:8.8px;left:167.4px;letter-spacing:-0.050px;">Севастополь</div>
<div class="a" style="top:412.5px;line-height:12px;font-size:8.85px;right:606.8px;">2:00</div>
<div class="a" style="top:412.5px;line-height:12px;font-size:8.8px;left:402.6px;letter-spacing:-0.12px;">Холодильник...</div>
<div class="a" style="top:412.5px;line-height:12px;font-size:8.85px;left:472.6px;">14.12.2020</div>
<div class="a" style="top:412.5px;line-height:12px;font-size:8.85px;left:543.0px;">08:17</div>
<div class="a" style="top:412.5px;line-height:12px;font-size:8.85px;left:577.6px;">14.12.2020 05:00</div>
<div class="a" style="top:412.5px;line-height:12px;font-size:8.85px;left:662.0px;">14.12.2020</div>
<div class="a" style="top:412.5px;line-height:12px;font-size:8.85px;left:722.0px;">10:32</div>
<div class="a" style="top:412.5px;line-height:12px;font-size:8.85px;right:175.2px;">301,000</div>
<div class="a" style="top:412.5px;line-height:12px;font-size:8.85px;right:126.2px;">7,000</div>
<div class="a" style="top:430.5px;line-height:12px;font-size:8.8px;left:167.4px;letter-spacing:-0.129px;">Заказ на ТС М0000...</div>
<div class="a" style="top:430.5px;line-height:12px;font-size:8.8px;left:262.4px;letter-spacing:-0.186px;">Разгрузка</div>
<div class="a" style="top:430.5px;line-height:12px;font-size:8.85px;right:606.8px;">0:15</div>
<div class="a" style="top:430.5px;line-height:12px;font-size:8.8px;right:537.2px;letter-spacing:-0.12px;">7,000, шт</div>
<div class="a" style="top:430.5px;line-height:12px;font-size:8.85px;left:472.6px;">16.12.2020</div>
<div class="a" style="top:430.5px;line-height:12px;font-size:8.85px;left:543.0px;">17:28</div>
<div class="a" style="top:430.5px;line-height:12px;font-size:8.85px;left:577.6px;">14.12.2020 07:00</div>
<div class="a" style="top:430.5px;line-height:12px;font-size:8.85px;left:662.0px;">16.12.2020</div>
<div class="a" style="top:430.5px;line-height:12px;font-size:8.85px;left:722.0px;">17:28</div>
<div class="a" style="top:430.5px;line-height:12px;font-size:8.85px;right:175.2px;">1,008</div>
<div class="a" style="left:113.2px;top:449.7px;width:9.8px;height:10.7px;box-sizing:border-box;border:1px solid #cfcfcf;background:#fff;border-radius:1px;"></div>
<div class="a" style="top:448.5px;line-height:12px;font-size:8.85px;right:841.2px;">6</div>
<div class="a" style="top:448.5px;line-height:12px;font-size:8.8px;left:167.4px;letter-spacing:-0.050px;">Севастополь</div>
<div class="a" style="top:448.5px;line-height:12px;font-size:8.85px;right:606.8px;">2:00</div>
<div class="a" style="top:448.5px;line-height:12px;font-size:8.8px;left:402.6px;letter-spacing:-0.110px;">Телевизор L...</div>
<div class="a" style="top:448.5px;line-height:12px;font-size:8.85px;left:472.6px;">14.12.2020</div>
<div class="a" style="top:448.5px;line-height:12px;font-size:8.85px;left:543.0px;">08:17</div>
<div class="a" style="top:448.5px;line-height:12px;font-size:8.85px;left:577.6px;">14.12.2020 05:00</div>
<div class="a" style="top:448.5px;line-height:12px;font-size:8.85px;left:662.0px;">14.12.2020</div>
<div class="a" style="top:448.5px;line-height:12px;font-size:8.85px;left:722.0px;">10:32</div>
<div class="a" style="top:448.5px;line-height:12px;font-size:8.85px;right:175.2px;">300,000</div>
<div class="a" style="top:466.5px;line-height:12px;font-size:8.8px;left:167.4px;letter-spacing:-0.129px;">Заказ на ТС М0000...</div>
<div class="a" style="top:466.5px;line-height:12px;font-size:8.8px;left:262.4px;letter-spacing:-0.186px;">Разгрузка</div>
<div class="a" style="top:466.5px;line-height:12px;font-size:8.85px;right:606.8px;">0:15</div>
<div class="a" style="top:466.5px;line-height:12px;font-size:8.8px;right:537.2px;letter-spacing:-0.241px;">15,000, шт</div>
<div class="a" style="top:466.5px;line-height:12px;font-size:8.85px;left:472.6px;">16.12.2020</div>
<div class="a" style="top:466.5px;line-height:12px;font-size:8.85px;left:543.0px;">17:28</div>
<div class="a" style="top:466.5px;line-height:12px;font-size:8.85px;left:577.6px;">14.12.2020 07:00</div>
<div class="a" style="top:466.5px;line-height:12px;font-size:8.85px;left:662.0px;">16.12.2020</div>
<div class="a" style="top:466.5px;line-height:12px;font-size:8.85px;left:722.0px;">17:28</div>
<div class="a" style="top:466.5px;line-height:12px;font-size:8.85px;right:175.2px;">5,265</div>
<svg class="a" style="left:879.4px;top:305.8px" width="3.60" height="2.40" viewBox="0 0 3.6 2.4"><path d="M0 2.4 H3.6 L1.8 0 Z" fill="#444"/></svg>
<div class="a" style="left:878.7px;top:316.0px;width:4.8px;height:151.4px;background:#d6d6d6;border-radius:2.4px;"></div>
<div class="a" style="left:878.7px;top:377.6px;width:4.8px;height:89.8px;background:#8f8f8f;border-radius:2.4px;"></div>
<svg class="a" style="left:879.4px;top:474.4px" width="4.00" height="2.50" viewBox="0 0 4 2.5"><path d="M0 0 H4 L2 2.5 Z" fill="#cfcfcf"/></svg>
<svg class="a" style="left:113.6px;top:487.6px" width="3.00" height="4.40" viewBox="0 0 3 4.4"><path d="M3 0 V4.4 L0 2.2 Z" fill="#c9c9c9"/></svg>
<div class="a" style="left:124.0px;top:486.6px;width:736.4px;height:6.2px;background:#d7d7d7;border-radius:3px;"></div>
<div class="a" style="left:124.0px;top:486.6px;width:369.6px;height:6.2px;background:#9c9c9c;border-radius:3px;"></div>
<svg class="a" style="left:866.8px;top:487.9px" width="2.40" height="3.60" viewBox="0 0 2.4 3.6"><path d="M0 0 V3.6 L2.4 1.8 Z" fill="#444"/></svg>
<!-- footer -->
<div class="a" style="left:100.4px;top:506.0px;width:793.2px;height:22.8px;background:#f2f2f2;"></div>
<div class="btn" style="left:104.2px;top:509.2px;width:18.4px;height:18.2px;"></div>
<div class="a" style="top:513.4px;line-height:12px;font-size:13.6px;left:109.2px;font-family:&quot;Liberation Serif&quot;,serif;font-weight:bold;color:#17967a;background:linear-gradient(#1a9fb8 25%,#1f9a52 75%);-webkit-background-clip:text;background-clip:text;-webkit-text-fill-color:transparent;">Σ</div>
<div class="a" style="top:512.8px;line-height:12px;font-size:8.8px;left:130.0px;letter-spacing:-0.166px;">Всего:</div>
<div class="a lnk" style="top:512.8px;line-height:12px;font-size:8.8px;left:160.0px;letter-spacing:-0.058px;">84,2 км / 9:02 / 1 471 кг / 10,593 м3 / 37 Паллета</div>
<div class="a" style="top:512.8px;line-height:12px;font-size:8.8px;left:612.4px;letter-spacing:0.131px;">Доходы:</div>
<div class="a" style="left:650.0px;top:510.0px;width:70.6px;height:17.4px;box-sizing:border-box;border:1px solid #e2e2e2;background:#ededed;"></div>
<div class="a" style="top:512.8px;line-height:12px;font-size:8.85px;right:281.0px;">3 195,20</div>
<div class="a" style="top:512.8px;line-height:12px;font-size:8.8px;left:727.6px;letter-spacing:-0.129px;">Расходы:</div>
<div class="a" style="left:767.6px;top:510.0px;width:71.4px;height:17.4px;box-sizing:border-box;border:1px solid #e2e2e2;background:#ededed;"></div>
<div class="a" style="top:512.8px;line-height:12px;font-size:8.85px;right:163.4px;">234,00</div>
<div class="a" style="top:512.8px;line-height:12px;font-size:8.8px;left:850.8px;letter-spacing:-0.12px;">р.</div>
<div class="btn" style="left:871.0px;top:509.2px;width:19.8px;height:18.0px;"></div>
<svg class="a" style="left:877.2px;top:514.6px" width="7.00" height="7.00" viewBox="0 0 7 7"><rect x="2.6" y="0.6" width="3.8" height="3.8" fill="#fff" stroke="#555" stroke-width="0.9"/><rect x="0.6" y="2.6" width="3.8" height="3.8" fill="#fff" stroke="#555" stroke-width="0.9"/></svg>
<!-- form scrollbar -->
<svg class="a" style="left:898.6px;top:217.6px" width="4.00" height="2.60" viewBox="0 0 4 2.6"><path d="M0 2.6 H4 L2 0 Z" fill="#cfcfcf"/></svg>
<div class="a" style="left:898.4px;top:228.2px;width:4.6px;height:282.4px;background:#d4d4d4;border-radius:2.3px;"></div>
<div class="a" style="left:898.4px;top:228.2px;width:4.6px;height:259.4px;background:#8c8c8c;border-radius:2.3px;"></div>
<svg class="a" style="left:898.8px;top:518.4px" width="3.40" height="2.40" viewBox="0 0 3.4 2.4"><path d="M0 0 H3.4 L1.7 2.4 Z" fill="#333"/></svg>
</body>
</html>
